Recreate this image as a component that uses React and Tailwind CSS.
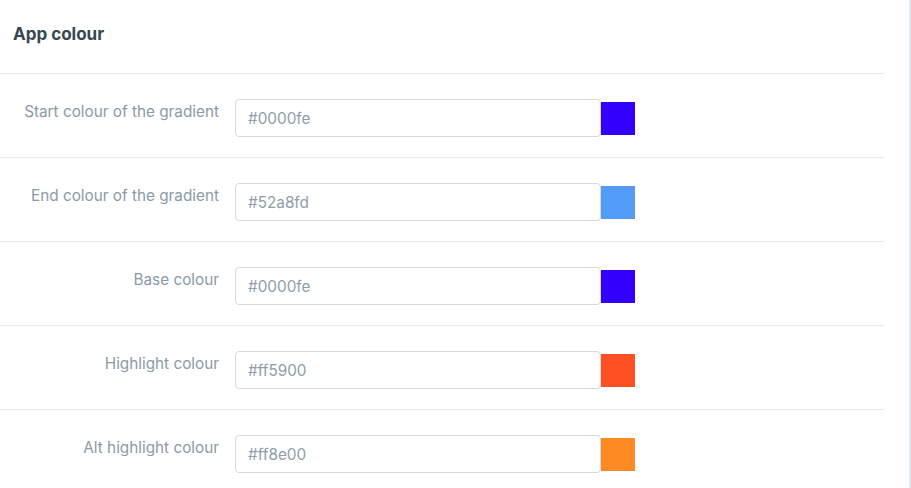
import React from "react";

const colours = [
  { label: "Start colour of the gradient", value: "#0000fe", swatch: "#3300fe" },
  { label: "End colour of the gradient", value: "#52a8fd", swatch: "#529cf8" },
  { label: "Base colour", value: "#0000fe", swatch: "#3300fe" },
  { label: "Highlight colour", value: "#ff5900", swatch: "#ff5024" },
  { label: "Alt highlight colour", value: "#ff8e00", swatch: "#ff8a24" },
];

function ColourRow({ label, value, swatch }) {
  return (
    <div className="flex items-start border-t border-[#ebebeb] pt-[25px] pb-[20px]">
      <label className="w-[219px] shrink-0 pt-[3px] text-right text-[15.3px] leading-[20px] text-[#8b9ba7]">
        {label}
      </label>
      <div className="ml-4 flex items-center">
        <input
          type="text"
          readOnly
          value={value}
          className="h-[38px] w-[366px] rounded-[4px] border border-[#d9d9d9] bg-white px-3 text-[15.3px] text-[#8f9ea9] outline-none"
        />
        <div className="h-[33px] w-[34px]" style={{ backgroundColor: swatch }} />
      </div>
    </div>
  );
}

export default function App() {
  return (
    <div
      className="h-[488px] w-[911px] overflow-hidden bg-white"
      style={{ fontFamily: 'Inter, "Liberation Sans", Arial, sans-serif' }}
    >
      <div className="h-full w-[911px] border-r-2 border-[#e3e8ee]">
        <div className="mr-[25px]">
          <div className="flex h-[73px] items-center px-[13px] pb-[4px]">
            <h2 className="text-[17px] font-bold text-[#38474f]">App colour</h2>
          </div>
          {colours.map((c, idx) => (
            <ColourRow key={idx} {...c} />
          ))}
        </div>
      </div>
    </div>
  );
}
